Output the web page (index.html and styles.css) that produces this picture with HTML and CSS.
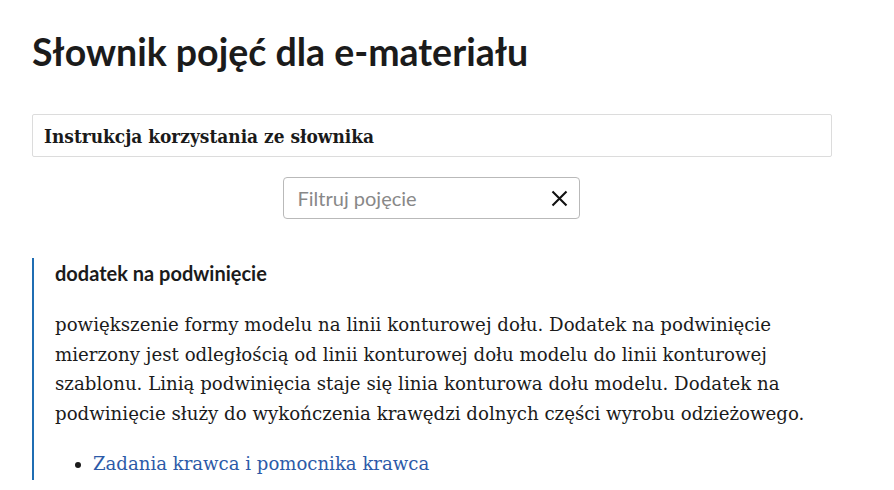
FILE: index.html
```html
<!DOCTYPE html>
<html lang="pl">
<head>
<meta charset="utf-8">
<title>Słownik pojęć</title>
<link rel="stylesheet" href="styles.css">
</head>
<body>
<main class="page">
  <h1 class="title">Słownik pojęć dla e-materiału</h1>
  <div class="instr">Instrukcja korzystania ze słownika</div>
  <div class="filter-row">
    <div class="filter">
      <span class="placeholder">Filtruj pojęcie</span>
      <svg class="clear" width="17" height="17" viewBox="0 0 17 17"><path d="M1.5 1.5 L15.5 15.5 M15.5 1.5 L1.5 15.5" stroke="#111" stroke-width="2.1" fill="none"/></svg>
    </div>
  </div>
  <section class="entry">
    <h2 class="term">dodatek na podwinięcie</h2>
    <p class="def">powiększenie formy modelu na linii konturowej dołu. Dodatek na podwinięcie mierzony jest odległością od linii konturowej dołu modelu do linii konturowej szablonu. Linią podwinięcia staje się linia konturowa dołu modelu. Dodatek na podwinięcie służy do wykończenia krawędzi dolnych części wyrobu odzieżowego.</p>
    <ul class="links">
      <li><a href="#">Zadania krawca i pomocnika krawca</a></li>
    </ul>
  </section>
</main>
</body>
</html>
```
FILE: styles.css
```css
html, body { margin: 0; padding: 0; background: #fff; }
body { font-family: "Lato", "Noto Sans", sans-serif; color: #1b1b1b; }
.page { padding: 0 62px 0 32px; width: 800px; }
.title { font-family: "Lato", sans-serif; font-weight: 700; font-size: 37.5px; margin: 0; padding-top: 30px; line-height: 44px; }
.instr { margin-top: 40px; border: 1px solid #dcdcdc; border-radius: 2px; height: 43px; box-sizing: border-box; display: flex; align-items: center; padding-left: 11px; font-family: "DejaVu Serif Condensed", "DejaVu Serif", serif; font-stretch: condensed; font-weight: 700; font-size: 18.9px; color: #1a1a1a; }
.filter-row { display: flex; justify-content: center; margin-top: 20px; }
.filter { width: 297px; height: 42px; margin-left: -2px; box-sizing: border-box; border: 1px solid #b9b9b9; border-radius: 4px; display: flex; align-items: center; justify-content: space-between; padding: 0 11px 0 14px; }
.placeholder { color: #888; font-size: 20px; font-family: "Lato", sans-serif; }
.clear { display: block; }
.entry { margin-top: 39px; border-left: 2px solid #1f6db3; padding-left: 21px; padding-bottom: 2px; }
.term { margin: 0; font-family: "Lato", sans-serif; font-weight: 700; font-size: 20px; line-height: 30px; color: #1b1b1b; }
.def { margin: 22px 0 0; font-family: "DejaVu Serif", serif; font-size: 18.2px; line-height: 29.6px; color: #1b1b1b; }
.links { margin: 21px 0 0; padding-left: 38px; font-family: "DejaVu Serif", serif; font-size: 18.1px; line-height: 29px; }
.links a { color: #2c5aa8; text-decoration: none; }
```
